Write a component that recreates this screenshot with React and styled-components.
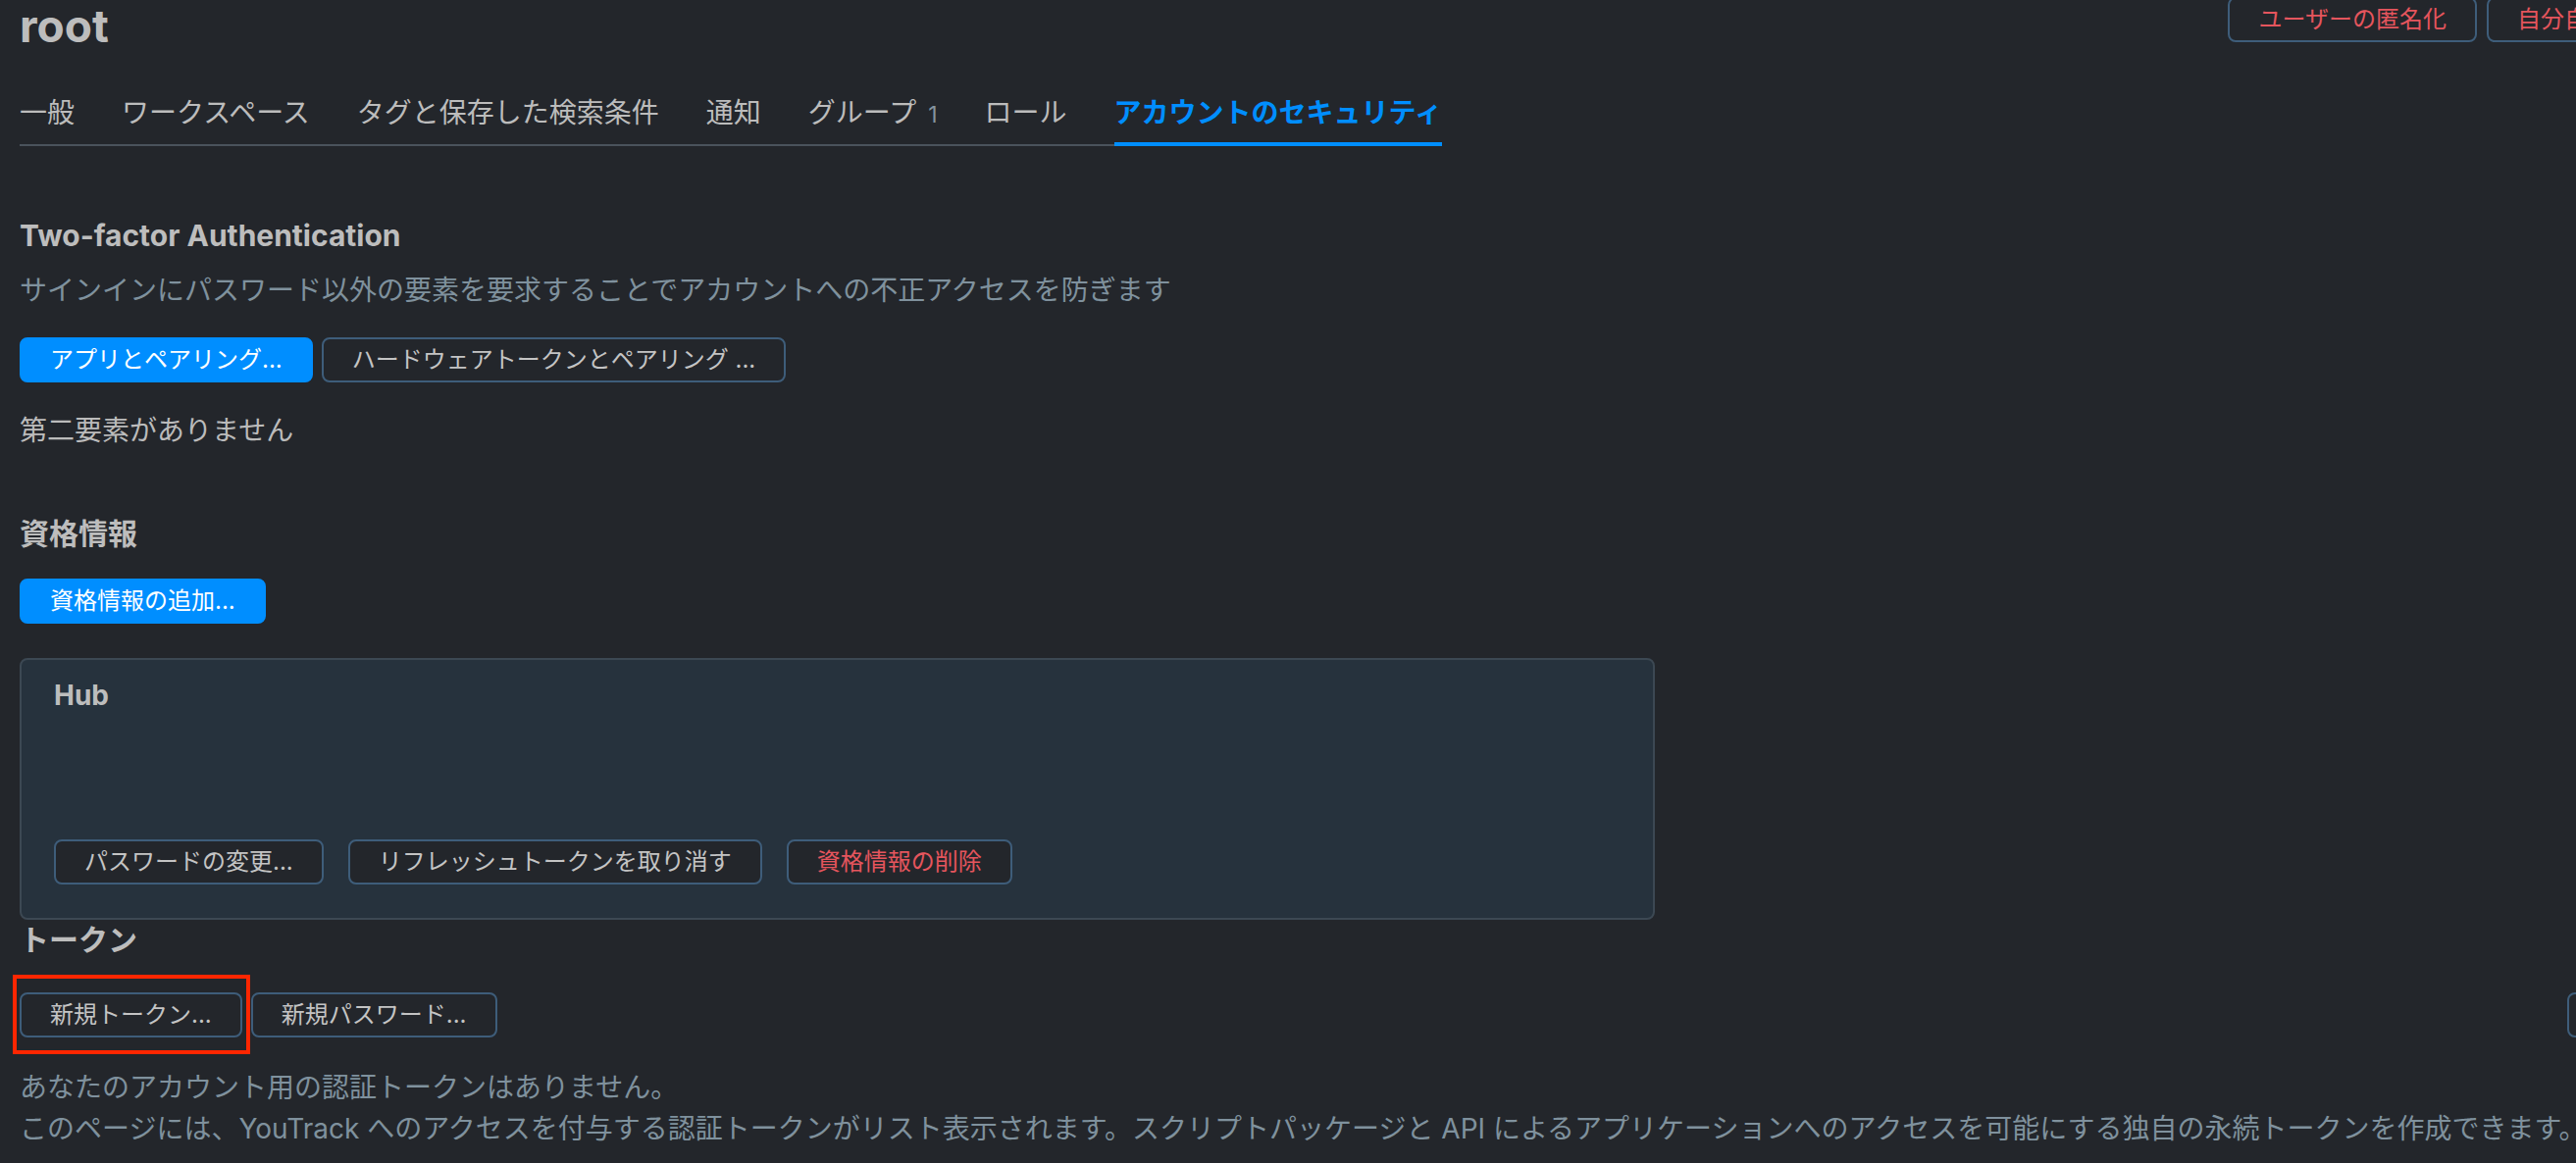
import React from 'react'
import styled, { createGlobalStyle } from 'styled-components'

const GlobalStyle = createGlobalStyle`
  html, body {
    margin: 0;
    padding: 0;
    overflow: hidden;
    background: #23262b;
  }
  body {
    font-family: Inter, "Noto Sans CJK JP", sans-serif;
    color: #bbbbbb;
  }
`

const tabs = [
  { label: '一般' },
  { label: 'ワークスペース' },
  { label: 'タグと保存した検索条件' },
  { label: '通知' },
  { label: 'グループ', count: 1 },
  { label: 'ロール' },
  { label: 'アカウントのセキュリティ', active: true },
]

function App() {
  return (
    <>
      <GlobalStyle />
      <Page>
        <Header>
          <Title>root</Title>
          <HeaderActions>
            <Button $danger>ユーザーの匿名化</Button>
            <Button $danger>自分自身を削除</Button>
          </HeaderActions>
        </Header>

        <TabBar>
          {tabs.map((t) => (
            <Tab key={t.label} $active={t.active}>
              {t.label}
              {t.count && <TabCount>{t.count}</TabCount>}
            </Tab>
          ))}
        </TabBar>

        <Heading $top={71}>Two-factor Authentication</Heading>
        <Hint $top={16}>サインインにパスワード以外の要素を要求することでアカウントへの不正アクセスを防ぎます</Hint>
        <ButtonRow $top={28}>
          <Button $primary>アプリとペアリング...</Button>
          <Button>ハードウェアトークンとペアリング ...</Button>
        </ButtonRow>
        <Plain $top={29}>第二要素がありません</Plain>

        <Heading $top={65}>資格情報</Heading>
        <ButtonRow $top={26}>
          <Button $primary>資格情報の追加...</Button>
        </ButtonRow>

        <Card>
          <CardTitle>Hub</CardTitle>
          <CardActions>
            <Button>パスワードの変更...</Button>
            <Button>リフレッシュトークンを取り消す</Button>
            <Button $danger>資格情報の削除</Button>
          </CardActions>
        </Card>

        <Heading $top={0}>トークン</Heading>
        <TokenRow>
          <ButtonRow $top={0}>
            <Marked>
              <Button>新規トークン...</Button>
              <Highlight />
            </Marked>
            <Button>新規パスワード...</Button>
          </ButtonRow>
          <Button $width={148}>削除</Button>
        </TokenRow>
        <Notes>
          <div>あなたのアカウント用の認証トークンはありません。</div>
          <div>
            このページには、YouTrack へのアクセスを付与する認証トークンがリスト表示されます。スクリプトパッケージと API によるアプリケーションへのアクセスを可能にする独自の永続トークンを作成できます。
          </div>
        </Notes>
      </Page>
    </>
  )
}

export default App

const Page = styled.div`
  width: 2745px;
  margin-top: -3px;
  padding-left: 20px;
  box-sizing: content-box;
`

const Header = styled.div`
  display: flex;
  justify-content: space-between;
  align-items: flex-start;
`

const Title = styled.h1`
  margin: 0;
  font-size: 46px;
  line-height: 58px;
  font-weight: 700;
  color: #bdbdbd;
`

const HeaderActions = styled.div`
  display: flex;
  gap: 10px;
`

const TabBar = styled.div`
  display: inline-flex;
  gap: 48px;
  margin-top: 40px;
  border-bottom: 2px solid #4a535c;
`

const Tab = styled.div`
  display: flex;
  align-items: baseline;
  font-size: 28px;
  line-height: 40px;
  padding-bottom: 8px;
  margin-bottom: -2px;
  border-bottom: 4px solid ${(p) => (p.$active ? '#008eff' : 'transparent')};
  color: ${(p) => (p.$active ? '#008eff' : '#bcbcbc')};
  font-weight: ${(p) => (p.$active ? 600 : 400)};
  white-space: nowrap;
`

const TabCount = styled.span`
  margin-left: 12px;
  font-size: 23px;
  color: #85939e;
`

const Heading = styled.h2`
  margin: ${(p) => p.$top}px 0 0;
  font-size: 30px;
  line-height: 40px;
  font-weight: 700;
  color: #bdbdbd;
`

const Hint = styled.p`
  margin: ${(p) => p.$top}px 0 0;
  font-size: 28px;
  line-height: 40px;
  color: #7f919d;
`

const Plain = styled.p`
  margin: ${(p) => p.$top}px 0 0;
  font-size: 28px;
  line-height: 40px;
  color: #bbbbbb;
`

const ButtonRow = styled.div`
  display: flex;
  gap: 9px;
  margin-top: ${(p) => p.$top}px;
`

const Button = styled.button`
  display: inline-flex;
  align-items: center;
  justify-content: center;
  box-sizing: border-box;
  height: 46px;
  width: ${(p) => (p.$width ? `${p.$width}px` : 'auto')};
  padding: 0 29px;
  border: 2px solid ${(p) => (p.$primary ? '#008eff' : '#3e5d7a')};
  border-radius: 8px;
  background: ${(p) => (p.$primary ? '#008eff' : '#23262b')};
  color: ${(p) => (p.$primary ? '#ffffff' : p.$danger ? '#e5555d' : '#c4c4c4')};
  font-family: Inter, "Noto Sans CJK JP", sans-serif;
  font-size: 24px;
  line-height: 1;
  white-space: nowrap;
  flex-shrink: 0;
  cursor: pointer;
`

const Card = styled.div`
  width: 1667px;
  box-sizing: border-box;
  margin-top: 35px;
  padding: 16px 33px 34px;
  background: #26323d;
  border: 2px solid #3c4853;
  border-radius: 8px;
`

const CardTitle = styled.div`
  font-size: 28px;
  line-height: 40px;
  font-weight: 700;
  color: #bdbdbd;
`

const CardActions = styled.div`
  display: flex;
  gap: 25px;
  margin-top: 127px;
`

const TokenRow = styled.div`
  display: flex;
  justify-content: space-between;
  margin-top: 34px;
`

const Marked = styled.div`
  position: relative;
  display: flex;
`

const Highlight = styled.div`
  position: absolute;
  left: -7px;
  right: -8px;
  top: -18px;
  bottom: -17px;
  border: 4px solid #ff2600;
  pointer-events: none;
`

const Notes = styled.div`
  margin-top: 30px;
  font-size: 28px;
  line-height: 42px;
  color: #7f919d;
  white-space: nowrap;
`
